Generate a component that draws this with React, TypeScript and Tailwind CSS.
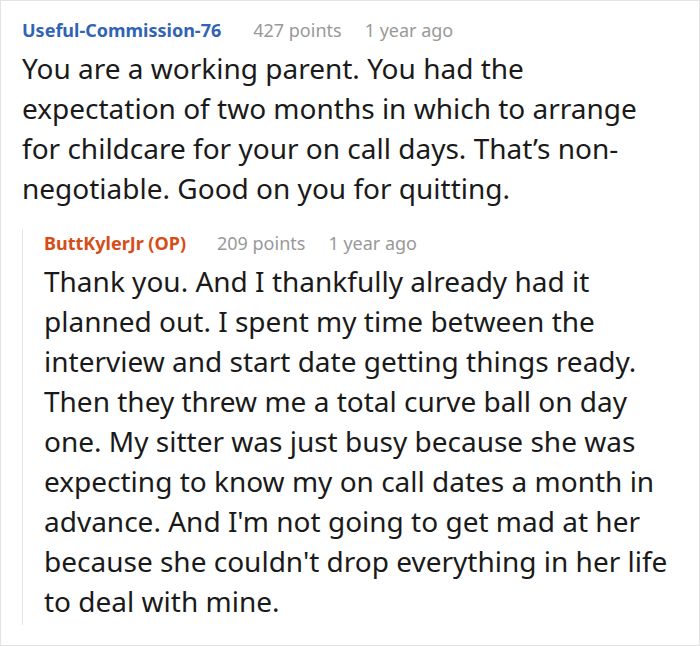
export default function App() {
  return (
    <div
      className="w-[700px] h-[646px] bg-white border border-[#e3e3e3] overflow-hidden"
      style={{ fontFamily: '"Noto Sans", sans-serif' }}
    >
      <div className="pl-[21px] pr-[30px] pt-[15px]">
        <div className="flex items-baseline text-[18px] leading-[28px]">
          <span className="font-bold text-[#3064b3] mr-[32px]">Useful-Commission-76</span>
          <span className="text-[#999999] mr-[23px]">427 points</span>
          <span className="text-[#999999]">1 year ago</span>
        </div>
        <p className="text-[28px] leading-[40px] text-[#1a1a1a] mt-[4px]">
          You are a working parent. You had the expectation of two months in which to arrange for childcare for your on call days. That’s non-negotiable. Good on you for quitting.
        </p>
        <div className="mt-[32px] border-l border-[#e6e6e6] pl-[21px] pb-[4px]">
          <div className="-mt-[11px] flex items-baseline text-[18px] leading-[28px]">
            <span className="font-bold text-[#d64d17] mr-[31px]">ButtKylerJr (OP)</span>
            <span className="text-[#999999] mr-[23px]">209 points</span>
            <span className="text-[#999999]">1 year ago</span>
          </div>
          <p className="text-[28px] leading-[40px] text-[#1a1a1a] mt-[4px]">
            Thank you. And I thankfully already had it planned out. I spent my time between the interview and start date getting things ready. Then they threw me a total curve ball on day one. My sitter was just busy because she was expecting to know my on call dates a month in advance. And I'm not going to get mad at her because she couldn't drop everything in her life to deal with mine.
          </p>
        </div>
      </div>
    </div>
  );
}
